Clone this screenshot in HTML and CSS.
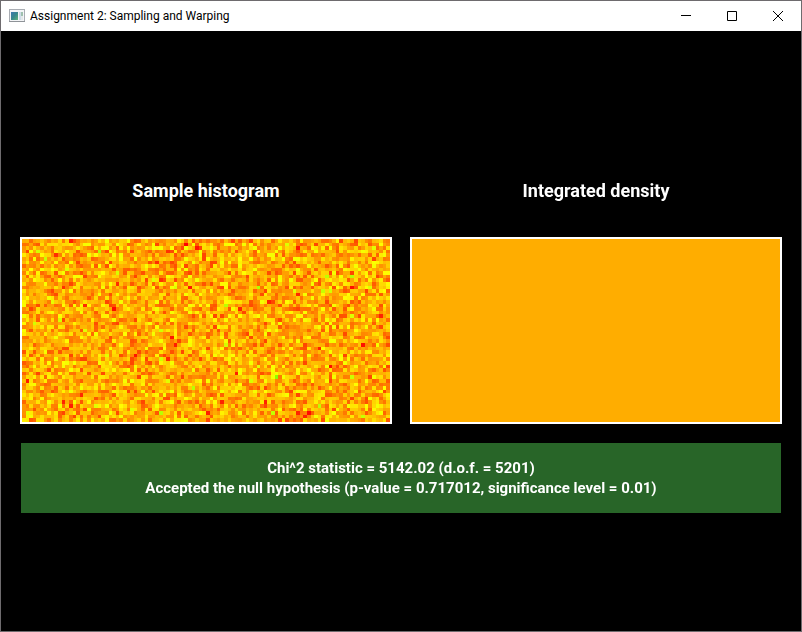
FILE: index.html
```html
<!DOCTYPE html>
<html lang="en">
<head>
<meta charset="utf-8">
<title>Assignment 2: Sampling and Warping</title>
<link rel="stylesheet" href="styles.css">
</head>
<body>
<div class="window">
  <header class="titlebar">
    <svg class="app-icon" width="16" height="14" viewBox="0 0 16 14" aria-hidden="true">
      <defs>
        <linearGradient id="screen" x1="0" y1="0" x2="1" y2="1">
          <stop offset="0" stop-color="#3d78b0"/>
          <stop offset="0.5" stop-color="#38888c"/>
          <stop offset="1" stop-color="#62b47a"/>
        </linearGradient>
      </defs>
      <rect x="0.5" y="0.5" width="15" height="12" fill="#f4f5f7" stroke="#a9adb3"/>
      <rect x="0" y="12" width="16" height="1" fill="#8f9398"/>
      <rect x="2" y="3" width="7" height="8" fill="url(#screen)"/>
      <rect x="10" y="3" width="2" height="8" fill="#cfdde8"/>
      <rect x="12" y="3" width="2" height="4" fill="#9fc0ae"/>
      <rect x="12" y="7" width="2" height="4" fill="#e4e8ea"/>
    </svg>
    <h1 class="title">Assignment 2: Sampling and Warping</h1>
    <div class="controls">
      <button class="control" type="button" aria-label="Minimize">
        <svg width="10" height="10" viewBox="0 0 10 10"><path d="M0 4.5H10"/></svg>
      </button>
      <button class="control" type="button" aria-label="Maximize">
        <svg width="10" height="10" viewBox="0 0 10 10"><path d="M.5 .5H9.5V9.5H.5Z"/></svg>
      </button>
      <button class="control" type="button" aria-label="Close">
        <svg width="10" height="10" viewBox="0 0 10 10"><path d="M0 0L10 10M10 0L0 10"/></svg>
      </button>
    </div>
  </header>
  <main class="content">
    <div class="plots">
      <section class="plot">
        <h2 class="plot-title">Sample histogram</h2>
        <canvas class="plot-area" id="histogram" width="102" height="51"></canvas>
      </section>
      <section class="plot">
        <h2 class="plot-title">Integrated density</h2>
        <div class="plot-area"></div>
      </section>
    </div>
    <div class="result" role="status">
      <p>Chi^2 statistic = 5142.02 (d.o.f. = 5201)</p>
      <p>Accepted the null hypothesis (p-value = 0.717012, significance level = 0.01)</p>
    </div>
  </main>
</div>
<script src="histogram.js"></script>
</body>
</html>
```
FILE: styles.css
```css
* {
  box-sizing: border-box;
}

body {
  margin: 0;
  background: #000;
}

.window {
  display: flex;
  flex-direction: column;
  min-height: 100vh;
  border: 1px solid #6e6b6e;
  background: #000;
}

.titlebar {
  display: flex;
  align-items: center;
  height: 30px;
  padding-left: 8px;
  background: #fff;
}

.app-icon {
  margin-right: 5px;
}

.title {
  margin: 0;
  font: 400 12px/16px "Segoe UI", Roboto, sans-serif;
  color: #000;
}

.controls {
  display: flex;
  margin-left: auto;
}

.control {
  display: grid;
  place-items: center;
  width: 46px;
  height: 30px;
  padding: 0;
  border: 0;
  background: transparent;
}

.control svg {
  fill: none;
  stroke: #000;
  stroke-width: 1;
}

.content {
  flex: 1;
  padding: 146px 19px 40px;
  font-family: Roboto, sans-serif;
  font-weight: 700;
  color: #fff;
}

.plots {
  display: grid;
  grid-template-columns: 1fr 1fr;
  gap: 18px;
}

.plot-title {
  margin: 0 0 32px;
  font-size: 18px;
  line-height: 28px;
  text-align: center;
}

.plot-area {
  display: block;
  width: 100%;
  aspect-ratio: 372 / 187;
  border: 2px solid #fff;
  background: #ffad00;
  image-rendering: pixelated;
}

.result {
  margin: 19px 1px 0;
  padding: 15px 10px;
  background: #286528;
  font-size: 15px;
  line-height: 20px;
  text-align: center;
}

.result p {
  margin: 0;
}
```
FILE: histogram.js
```js
const canvas = document.getElementById("histogram");
const ctx = canvas.getContext("2d");
const cols = canvas.width;
const rows = canvas.height;

// Expected level of a bin and the spread of the sampled counts.
const MEAN = 173;
const SPREAD = 48;

let seed = 20517;
function random() {
  seed = (seed * 1664525 + 1013904223) % 4294967296;
  return (seed + 1) / 4294967297;
}

function normal() {
  return Math.sqrt(-2 * Math.log(random())) * Math.cos(2 * Math.PI * random());
}

// Levels run from red (0) through yellow (255) to green (510).
function drawBin(col, row, level) {
  const green = Math.round(Math.max(0, Math.min(255, level)));
  const red = Math.round(Math.max(0, Math.min(255, 510 - level)));
  ctx.fillStyle = `rgb(${red}, ${green}, 0)`;
  ctx.fillRect(col, row, 1, 1);
}

for (let row = 0; row < rows; row++) {
  for (let col = 0; col < cols; col++) {
    const level = MEAN + SPREAD * normal();
    drawBin(col, row, Math.max(70, Math.min(265, level)));
  }
}

// Bins whose counts lie furthest from the mean: [column, row, level].
const outliers = [
  [13, 0, 30], [45, 1, 0], [48, 2, 20], [76, 2, 25], [40, 3, 50],
  [1, 3, 70], [9, 4, 45], [37, 6, 45], [38, 11, 50], [26, 12, 45],
  [11, 13, 50], [46, 13, 20], [91, 13, 15], [76, 15, 40], [68, 17, 35],
  [17, 18, 40], [25, 19, 10], [60, 19, 35], [99, 21, 35], [41, 27, 25],
  [42, 29, 30], [94, 29, 15], [82, 30, 30], [31, 32, 20], [40, 33, 40],
  [85, 35, 10], [59, 37, 30], [1, 39, 25], [16, 43, 40], [11, 45, 35],
  [55, 45, 35], [67, 45, 35], [13, 46, 30], [51, 48, 30], [76, 48, 35],
  [79, 48, 10], [78, 49, 35],
  [73, 1, 290], [97, 2, 285], [4, 3, 300], [21, 3, 340], [6, 5, 310],
  [12, 8, 290], [26, 9, 295], [84, 10, 320], [91, 10, 325], [36, 11, 290],
  [42, 13, 290], [65, 13, 335], [96, 13, 290], [75, 14, 285], [83, 14, 310],
  [85, 14, 300], [8, 17, 280], [56, 18, 325], [91, 21, 290], [10, 22, 300],
  [3, 23, 300], [17, 25, 285], [38, 25, 300], [56, 29, 300], [23, 32, 285],
  [38, 33, 300], [65, 35, 285], [70, 38, 370], [91, 38, 310], [40, 39, 285],
  [63, 39, 295], [47, 41, 325], [20, 46, 285], [82, 46, 320], [30, 47, 285],
  [1, 48, 285], [38, 48, 325], [69, 48, 315], [94, 49, 310]
];
for (const [col, row, level] of outliers) {
  drawBin(col, row, level);
}
```
